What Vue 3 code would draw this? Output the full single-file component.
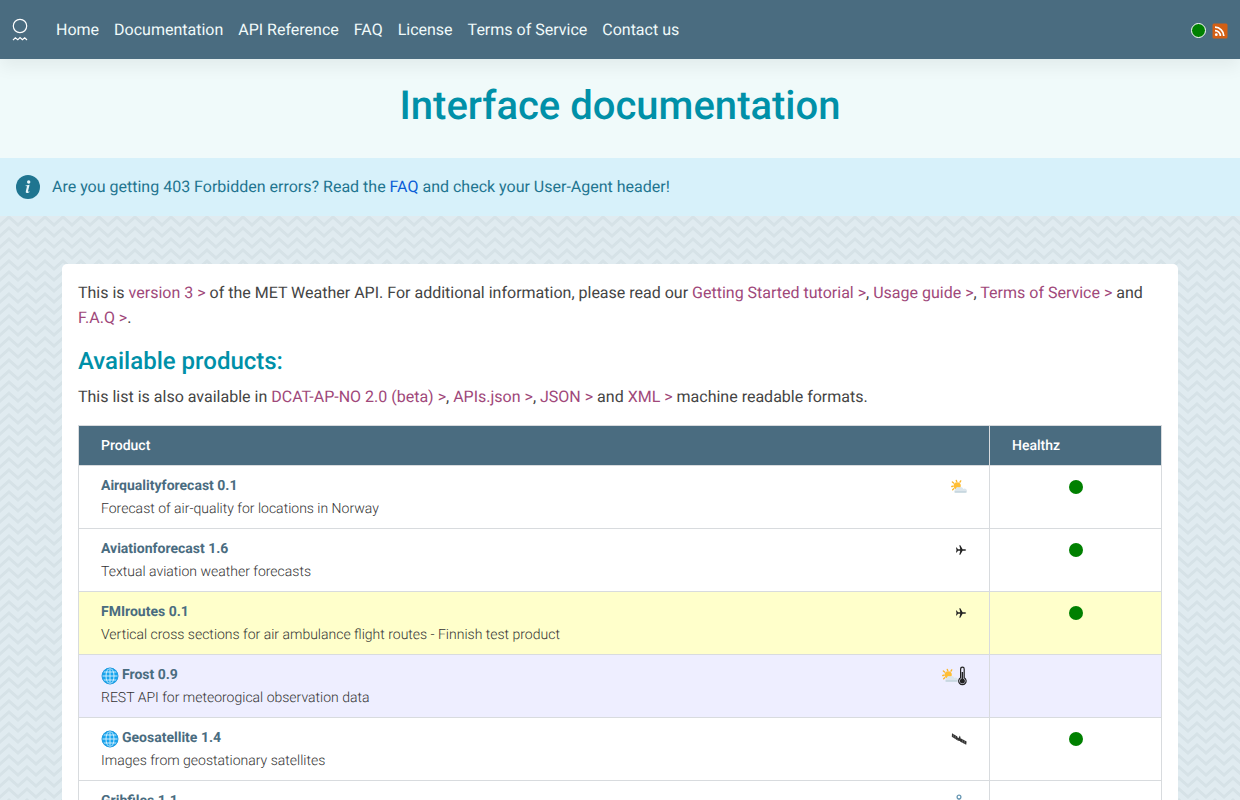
<script setup>
const navItems = ['Home', 'Documentation', 'API Reference', 'FAQ', 'License', 'Terms of Service', 'Contact us']

const products = [
  { name: 'Airqualityforecast 0.1', text: 'Forecast of air-quality for locations in Norway', icons: ['cloud'], healthy: true },
  { name: 'Aviationforecast 1.6', text: 'Textual aviation weather forecasts', icons: ['plane'], healthy: true },
  { name: 'FMIroutes 0.1', text: 'Vertical cross sections for air ambulance flight routes - Finnish test product', icons: ['plane'], healthy: true, tone: 'beta' },
  { name: 'Frost 0.9', text: 'REST API for meteorogical observation data', icons: ['cloud', 'thermo'], global: true, tone: 'external' },
  { name: 'Geosatellite 1.4', text: 'Images from geostationary satellites', icons: ['satellite'], global: true, healthy: true },
  { name: 'Gribfiles 1.1', text: '', icons: ['anchor'] },
]
</script>

<template>
  <div class="page">
    <header class="navbar">
      <a class="brand" href="#" aria-label="MET Norway">
        <svg width="16" height="24" viewBox="0 0 16 24" fill="none" stroke="#fff" stroke-width="1.2">
          <circle cx="8" cy="8" r="6.7" />
          <path d="M1 22.2 3.3 19.8 5.8 21.8 8 19.6 10.4 21.8 12.7 19.8 15 22" />
        </svg>
      </a>
      <nav>
        <a v-for="item in navItems" :key="item" href="#">{{ item }}</a>
      </nav>
      <div class="status">
        <a href="#" aria-label="Status" class="state"><i class="dot outlined"></i></a>
        <a href="#" aria-label="RSS feed" class="state">
          <svg width="16" height="16" viewBox="0 0 16 16">
            <rect x="0.5" y="0.5" width="15" height="15" rx="1.5" fill="#d35f14" />
            <g fill="none" stroke="#fff" stroke-width="1.7">
              <path d="M3 7.6A5.4 5.4 0 0 1 8.4 13" />
              <path d="M3 4.2A8.8 8.8 0 0 1 11.8 13" />
            </g>
            <circle cx="4.3" cy="11.7" r="1.4" fill="#fff" />
          </svg>
        </a>
      </div>
    </header>

    <div class="hero"><h1>Interface documentation</h1></div>

    <div class="notice">
      <svg width="24" height="24" viewBox="0 0 24 24" aria-hidden="true">
        <circle cx="12" cy="12" r="12" fill="#1f7590" />
        <circle cx="12.7" cy="7" r="1.7" fill="#e6f5fa" />
        <path d="M9.6 10.4 13.6 9.8 12 16.3Q11.9 17.2 13.5 16.3L13.3 17.2Q9.2 19.3 9.8 16.3L11 11.2 9.5 11Z" fill="#e6f5fa" />
      </svg>
      <p>Are you getting 403 Forbidden errors? Read the <a href="#">FAQ</a> and check your User-Agent header!</p>
    </div>

    <svg class="defs" width="0" height="0" aria-hidden="true">
      <symbol id="cloud" viewBox="0 0 16 16">
        <g stroke="#f9b52b" stroke-width="1.4" stroke-linecap="round">
          <path d="M5.7 2.6 5.3 1.5M2.6 4 1.4 3M2 7.2.8 7.5M2.7 9.8 1.7 10.7M9 3.1 9.7 1.9" />
        </g>
        <circle cx="6.2" cy="6.8" r="3.6" fill="#ffbe35" />
        <path d="M4.2 13.5A2.2 2.2 0 0 1 4.6 10 2.6 2.6 0 0 1 8 8.3 3.4 3.4 0 0 1 12.4 9.9 2.2 2.2 0 0 1 15.8 12.2Q15.8 13.5 14 13.5Z" fill="#dce6ec" />
        <path d="M3.5 13H15.5" stroke="#b4c9d4" />
      </symbol>
      <symbol id="plane" viewBox="0 0 12 16">
        <path d="M11.2 8Q11 8.7 9.8 8.7H7.6L5.3 12.8H4.3L5.3 8.7H3L1.7 10.4H1L1.5 8 1 5.6H1.7L3 7.3H5.3L4.3 3.2H5.3L7.6 7.3H9.8Q11 7.3 11.2 8Z" fill="#222" />
      </symbol>
      <symbol id="thermo" viewBox="0 0 9 20">
        <path d="M2.6 11.7V3A1.8 1.8 0 0 1 6.2 3V11.7A3.7 3.7 0 1 1 2.6 11.7Z" fill="none" stroke="#222" stroke-width="1.2" />
        <path d="M4.4 6V15" stroke="#222" stroke-width="1.5" />
        <circle cx="4.4" cy="14.9" r="2.5" fill="#222" />
      </symbol>
      <symbol id="satellite" viewBox="0 0 16 16">
        <path d="M1 2.2 6.4 5.6 6 9 .8 5.7ZM10 7.4 15.6 10.5 15.2 13.8 9.4 10.8Z" fill="#333" />
        <path d="M5 6.8 11 10" stroke="#333" stroke-width="2" />
        <path d="M8.9 4.6 10.2 9.2 6.3 9.8Z" fill="#333" />
        <path d="M2.5 3.2 2.2 6.7M4.5 4.7 4.1 8M11.7 8.3 11.3 12M13.6 9.4 13.2 12.8" stroke="#999" stroke-width=".4" />
      </symbol>
      <symbol id="anchor" viewBox="0 0 16 16">
        <g fill="none" stroke="#6998b4" stroke-width="1.3">
          <circle cx="8" cy="3" r="1.9" />
          <path d="M8 5.2V15M5 6.8H11M2.5 10Q3.2 14.6 8 14.8 12.8 14.6 13.5 10" />
        </g>
      </symbol>
    </svg>

    <main>
      <p>
        This is <a href="#">version 3 &gt;</a> of the MET Weather API. For additional information, please read our
        <a href="#">Getting Started tutorial &gt;</a>, <a href="#">Usage guide &gt;</a>,
        <a href="#">Terms of Service &gt;</a> and <a href="#">F.A.Q &gt;</a>.
      </p>
      <h2>Available products:</h2>
      <p>
        This list is also available in <a href="#">DCAT-AP-NO 2.0 (beta) &gt;</a>, <a href="#">APIs.json &gt;</a>,
        <a href="#">JSON &gt;</a> and <a href="#">XML &gt;</a> machine readable formats.
      </p>
      <table>
        <thead>
          <tr><th>Product</th><th class="status-col">Healthz</th></tr>
        </thead>
        <tbody>
          <tr v-for="p in products" :key="p.name" :class="p.tone">
            <td>
              <div class="title">
                <svg v-if="p.global" class="globe" width="18" height="18" viewBox="0 0 18 18" aria-hidden="true">
                  <circle cx="9" cy="9" r="8.2" fill="#18a5ee" />
                  <g fill="none" stroke="#d8f1fd" stroke-width=".9">
                    <ellipse cx="9" cy="9" rx="4" ry="7.7" />
                    <path d="M9 1V17M1 9H17M2.5 5H15.5M2.5 13H15.5" />
                  </g>
                  <circle cx="9" cy="9" r="8" fill="none" stroke="#1e96da" stroke-width=".8" />
                </svg>
                <a href="#">{{ p.name }}</a>
                <span class="icons">
                  <svg v-for="i in p.icons" :key="i" :class="i" aria-hidden="true"><use :href="'#' + i" /></svg>
                </span>
              </div>
              <div class="text">{{ p.text }}</div>
            </td>
            <td class="health"><a v-if="p.healthy" href="#" aria-label="Healthy"><i class="dot"></i></a></td>
          </tr>
        </tbody>
      </table>
    </main>
  </div>
</template>

<style>
body {
  margin: 0;
  overflow: hidden;
}
html, body, #app {
  height: 100%;
}
</style>

<style scoped>
.page {
  height: 100%;
  overflow: hidden;
  font: 16px/25px Roboto, "Liberation Sans", sans-serif;
  text-rendering: geometricPrecision;
  color: #444;
  background: #e0ebf0 url("data:image/svg+xml,%3Csvg xmlns='http://www.w3.org/2000/svg' width='18' height='11'%3E%3Cpath d='M-9 -3 0 5 9 -3 18 5 27 -3M-9 8 0 16 9 8 18 16 27 8M-9 -14 0 -6 9 -14 18 -6 27 -14' fill='none' stroke='%23d6e2e7' stroke-width='3'/%3E%3C/svg%3E");
}
a {
  text-decoration: none;
}
.navbar {
  position: relative;
  display: flex;
  align-items: center;
  box-sizing: border-box;
  height: 59px;
  padding: 0 12px;
  background: #4a6c80;
  box-shadow: 0 8px 16px rgba(0, 0, 0, 0.06);
}
.brand {
  display: flex;
  margin-right: 28px;
}
nav {
  display: flex;
  flex: 1;
  gap: 15px;
}
nav a {
  color: #f0fafa;
}
.status {
  display: flex;
  align-items: center;
  gap: 6px;
  padding-top: 2px;
}
.state {
  display: flex;
}
.dot {
  display: block;
  width: 14px;
  height: 14px;
  border-radius: 50%;
  background: #008000;
}
.outlined {
  box-sizing: border-box;
  width: 15px;
  height: 15px;
  border: 1px solid #fff;
}
.hero {
  padding: 23px 16px 28px;
  background: #f0fafa;
  text-align: center;
}
h1 {
  margin: 0;
  font-size: 40px;
  line-height: 48px;
  font-weight: 500;
  color: #0090a8;
}
.notice {
  display: flex;
  align-items: center;
  gap: 12px;
  padding: 16px;
  background: #d7f1fa;
  color: #1f7590;
}
.notice p {
  margin: 0;
  line-height: 26px;
}
.notice a {
  color: #0b5ed7;
}
.defs {
  position: absolute;
}
main {
  margin: 48px 5%;
  padding: 16px;
  border-radius: 5px;
  background: #fff;
}
main p {
  margin: 0 0 16px;
}
main p a {
  color: #a0487a;
}
h2 {
  margin: 0 0 8px;
  font-size: 24px;
  line-height: 30px;
  font-weight: 500;
  color: #0090a8;
}
table {
  width: 100%;
  table-layout: fixed;
  border-collapse: collapse;
  font-size: 14px;
  line-height: 23px;
}
th, td {
  padding: 9px 22px 7px;
  border: 1px solid #d8dbde;
  text-align: left;
  vertical-align: top;
}
th {
  background: #4a6c80;
  color: #fff;
  font-weight: 500;
}
.status-col {
  box-sizing: border-box;
  width: 172px;
}
.title {
  display: flex;
  align-items: center;
  gap: 3px;
  height: 23px;
}
.title a {
  color: #4a6c80;
  font-weight: 700;
}
.icons {
  display: flex;
  align-items: center;
  margin-left: auto;
}
.cloud, .satellite, .anchor {
  width: 16px;
  height: 16px;
}
.plane {
  width: 12px;
  height: 16px;
}
.thermo {
  width: 9px;
  height: 20px;
}
.text {
  min-height: 23px;
  font-weight: 300;
  color: #333;
}
.health .dot {
  margin: 5px auto 0;
}
.beta {
  background: #ffffcb;
}
.external {
  background: #eeeeff;
}
</style>
